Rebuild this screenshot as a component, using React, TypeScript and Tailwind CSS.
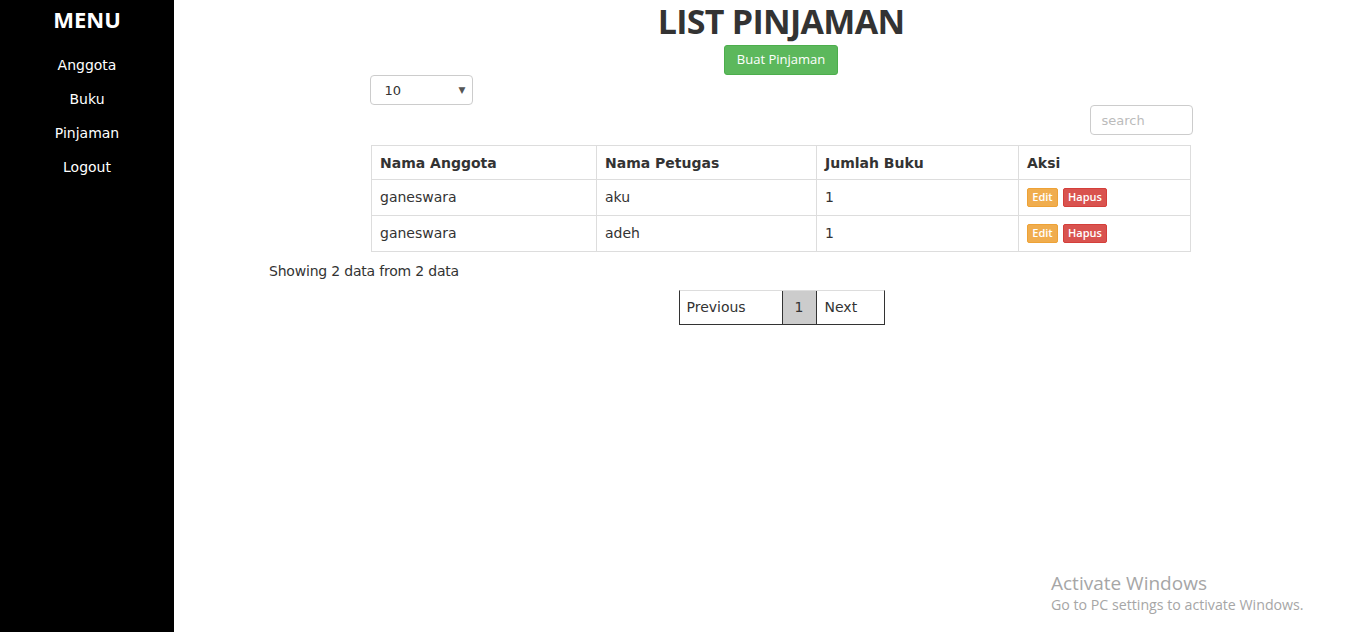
import React from "react";

const body = { fontFamily: '"DejaVu Sans", Verdana, sans-serif' };
const open = { fontFamily: '"Open Sans", sans-serif' };

export default function App() {
  const rows = [
    { a: "ganeswara", p: "aku", j: "1" },
    { a: "ganeswara", p: "adeh", j: "1" },
  ];
  return (
    <div className="flex w-[1347px] h-[632px] bg-white overflow-hidden relative" style={body}>
      <aside className="w-[174px] shrink-0 bg-black text-white flex flex-col items-center">
        <div className="mt-[5px] text-[22px] leading-[28px] font-bold" style={open}>MENU</div>
        <nav className="mt-[22px] flex flex-col items-center gap-[14px] text-[14px] leading-[20px]">
          <a>Anggota</a>
          <a>Buku</a>
          <a>Pinjaman</a>
          <a>Logout</a>
        </nav>
      </aside>
      <main className="flex-1 pl-[41px] text-[#333] text-[14px]">
        <div className="flex flex-col items-center">
          <h1 className="h-[40px] pt-[3px] text-[34px] leading-[37px] tracking-[-0.7px] font-bold text-[#333]" style={open}>
            LIST PINJAMAN
          </h1>
          <button className="mt-[5px] h-[30px] px-[12px] rounded-[3px] bg-[#5cb85c] border border-[#4cae4c] text-white text-[13px]" style={open}>
            Buat Pinjaman
          </button>
          <div className="w-[823px] flex flex-col">
            <div className="w-[103px] h-[30px] border border-[#ccc] rounded-[4px] flex items-center justify-between pl-[14px] pr-[6px] pt-[2px] text-[13px]">
              <span>10</span>
              <span className="text-[9px] text-[#555]">▼</span>
            </div>
            <div className="self-end w-[103px] h-[30px] border border-[#ccc] rounded-[4px] flex items-center pl-[11px] pt-[1px] text-[13px] text-[#bbb]">
              search
            </div>
            <table className="mt-[10px] mx-auto w-[820px] border-collapse text-[14px]">
              <thead>
                <tr className="h-[34px]">
                  <th className="w-[225px] border border-[#ddd] text-left font-bold px-[8px] pt-[1px]">Nama Anggota</th>
                  <th className="w-[220px] border border-[#ddd] text-left font-bold px-[8px] pt-[1px]">Nama Petugas</th>
                  <th className="w-[202px] border border-[#ddd] text-left font-bold px-[8px] pt-[1px]">Jumlah Buku</th>
                  <th className="border border-[#ddd] text-left font-bold px-[8px] pt-[1px]">Aksi</th>
                </tr>
              </thead>
              <tbody>
                {rows.map((r, i) => (
                  <tr key={i} className="h-[36px]">
                    <td className="border border-[#ddd] px-[8px]">{r.a}</td>
                    <td className="border border-[#ddd] px-[8px]">{r.p}</td>
                    <td className="border border-[#ddd] px-[8px]">{r.j}</td>
                    <td className="border border-[#ddd] px-[8px]">
                      <div className="flex gap-[5px]" style={open}>
                        <span className="h-[19px] w-[31px] justify-center flex items-center rounded-[2px] bg-[#f0ad4e] border border-[#eea236] text-white text-[11px] font-semibold">Edit</span>
                        <span className="h-[19px] w-[44px] justify-center flex items-center rounded-[2px] bg-[#d9534f] border border-[#d43f3a] text-white text-[11px] font-semibold">Hapus</span>
                      </div>
                    </td>
                  </tr>
                ))}
              </tbody>
            </table>
          </div>
        </div>
        <div className="ml-[54px] mt-[9px] leading-[20px] text-[14px] tracking-[-0.2px]">Showing 2 data from 2 data</div>
        <div className="flex justify-center mt-[9px] pl-[1px]">
          <div className="flex h-[35px] border border-[#333] border-t-[#ddd] text-[14px]">
            <span className="w-[103px] flex items-center pl-[7px] border-r border-[#333]">Previous</span>
            <span className="w-[34px] flex items-center justify-center bg-[#ccc] border-r border-[#333]">1</span>
            <span className="w-[67px] flex items-center pl-[8px]">Next</span>
          </div>
        </div>
      </main>
      <div className="absolute left-[1051px] top-[571px] text-[#a6a6a6]" style={open}>
        <div className="text-[19px] leading-[24px]">Activate Windows</div>
        <div className="text-[14.2px] leading-[20px]">Go to PC settings to activate Windows.</div>
      </div>
    </div>
  );
}
